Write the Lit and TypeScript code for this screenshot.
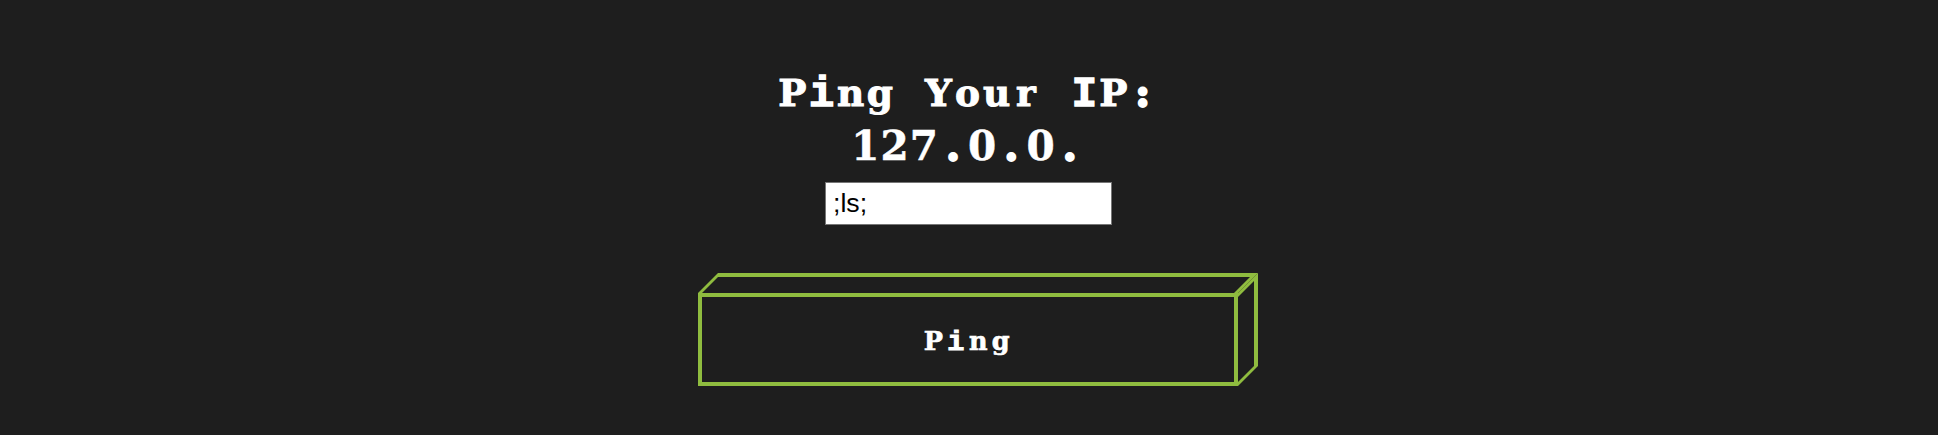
import { LitElement, html, css } from "lit";
import { customElement } from "lit/decorators.js";

// Equal-width cells; narrow glyphs, dots and digits take their own face and weight.
const kind = (c: string) =>
  "iI".includes(c) ? "narrow" : ".:".includes(c) ? "dot" : "0127".includes(c) ? "digit" : "slab";
const mono = (text: string) => [...text].map((c) => html`<span class="cell ${kind(c)}">${c}</span>`);

@customElement("app-root")
export class AppRoot extends LitElement {
  static styles = css`
    :host { display: block; height: 435px; background: #1e1e1e; overflow: hidden; color: #fff; }
    form { display: flex; flex-direction: column; align-items: center; padding-top: 67px; margin: 0; }
    h1 { margin: 0 3px 0 0; font: 700 37.5px/53px "DejaVu Serif", serif; }
    .line { display: flex; justify-content: center; align-items: baseline; height: 53px; }
    .cell { display: flex; justify-content: center; width: 29.2px; white-space: pre; -webkit-text-stroke: 0.025em #fff; stroke-linejoin: round; }
    .narrow { font-family: "Liberation Mono", monospace; font-size: 1.12em; -webkit-text-stroke-width: 0.035em; }
    .dot { -webkit-text-stroke-width: 0.075em; }
    .digit { font-size: 1.08em; -webkit-text-stroke-width: 0.012em; }
    input { box-sizing: border-box; width: 287px; height: 43px; margin: 9px 1px 0 0; padding: 2px 7px; border: 1px solid #767676; border-radius: 0; outline: 0; background: #fff; color: #000; font: 26.67px "Liberation Sans", sans-serif; }
    button { display: grid; width: 560px; height: 113px; margin: 48px 0 0 18px; padding: 0; border: 0; background: none; color: #fff; }
    svg, .label { grid-area: 1 / 1; display: block; }
    .label { display: flex; justify-content: center; align-items: baseline; width: 538px; height: 36px; padding-top: 50px; font: 700 25.5px/36px "DejaVu Serif", serif; }
    .label .cell { width: 22.4px; }
  `;
  render() {
    return html`<form @submit=${(e: Event) => e.preventDefault()}>
      <h1><div class="line">${mono("Ping Your IP:")}</div><div class="line">${mono("127.0.0.")}</div></h1>
      <input .value=${";ls;"} aria-label="IP" />
      <button><svg width="560" height="113" fill="#8fbc3f">
        <path fill-rule="evenodd" d="M0 20H540V113H0ZM4 24V109H536V24Z"/>
        <path d="M0 20L20 0H560L540 20H536L552 4H20L4 20Z"/>
        <path d="M540 20L560 0V93L540 113V109L556 93V8L540 24Z"/>
      </svg><span class="label">${mono("Ping")}</span></button>
    </form>`;
  }
}
